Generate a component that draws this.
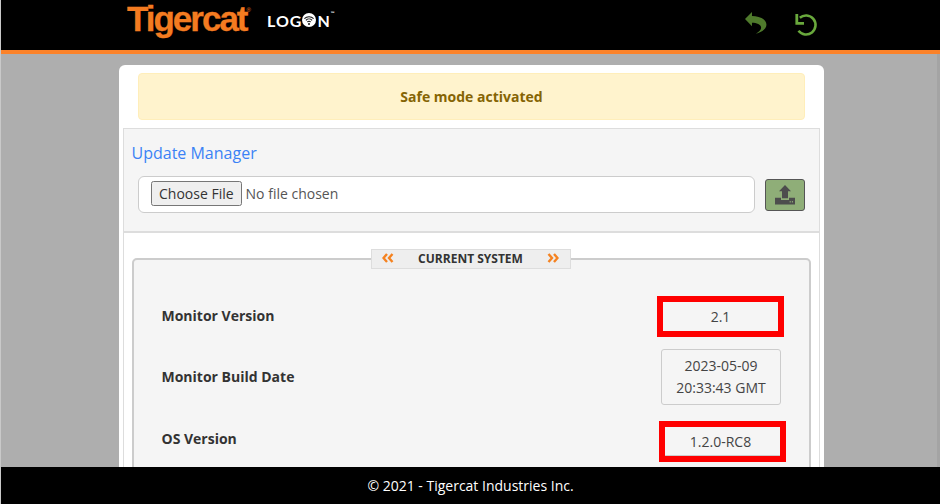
<div class="shell">
  <header class="topbar">
    <div class="brand">
      <span class="tigercat">Tigercat<sup>®</sup></span>
      <span class="logon">LOG<svg class="wifi-o" viewBox="0 0 14 14" aria-hidden="true"><circle cx="7" cy="7" r="7" fill="#fff"/><path d="M2.4 5.6a6.6 6.6 0 0 1 9.2 0M3.9 7.3a4.4 4.4 0 0 1 6.2 0M5.4 9a2.2 2.2 0 0 1 3.2 0" fill="none" stroke="#111" stroke-width="1.1"/><circle cx="7" cy="11" r="1" fill="#111"/></svg>N<sup>™</sup></span>
    </div>
    <div class="actions">
      <svg class="reply" viewBox="0 0 24 23" preserveAspectRatio="none" aria-hidden="true"><path d="M0 7.2 7.6 0v4.2C15 4.4 23.4 6.6 23.4 13.4c0 4.4-5 7.4-11.6 9.4 3.6-2.4 5.8-4.2 5.8-6.4 0-3.4-5-5.2-10-5.2v3.800z" fill="#4f7a2c"/></svg>
      <svg class="undo" viewBox="0 0 24 24" aria-hidden="true"><path d="M5.800 4.800A9.500 9.500 0 1 1 4.500 17.800" fill="none" stroke="#69a83c" stroke-width="2.600"/><path d="M2.800 1v9.300H10" fill="none" stroke="#69a83c" stroke-width="2.800"/></svg>
    </div>
  </header>

  <main class="stage">
    <div class="card">
      <div class="alert">Safe mode activated</div>
      <section class="update">
        <h2>Update Manager</h2>
        <div class="upload-row">
          <div class="file-box"><input type="file" /></div>
          <button class="upload-btn" type="button" aria-label="Upload">
            <svg viewBox="0 0 20 20" aria-hidden="true"><path d="M10 0 16 6.200H13V13.300H7V6.200H4z" fill="#4d4d4d"/><path d="M0 12.700H6V15H14V12.700H20V19.400H0z" fill="#4d4d4d"/><path d="M14.700 16h1v1.600h-1zM16.900 16h1v1.600h-1z" fill="#8fae78"/></svg>
          </button>
        </div>
      </section>
      <div class="lower">
        <fieldset>
          <legend>
            <svg viewBox="0 0 12 10" aria-hidden="true"><path d="M5 1 1.500 5 5 9M10.500 1 7 5l3.500 4" fill="none" stroke="#f58220" stroke-width="2.400"/></svg>
            <span>CURRENT SYSTEM</span>
            <svg viewBox="0 0 12 10" aria-hidden="true"><path d="M1.500 1 5 5 1.500 9M7 1l3.500 4L7 9" fill="none" stroke="#f58220" stroke-width="2.400"/></svg>
          </legend>
          <div class="row first">
            <span class="label">Monitor Version</span>
            <div class="value alarm">2.1</div>
          </div>
          <div class="row second">
            <span class="label">Monitor Build Date</span>
            <div class="value plain">2023-05-09<br />20:33:43 GMT</div>
          </div>
          <div class="row third">
            <span class="label os-label">OS Version</span>
            <div class="value alarm os">1.2.0-RC8</div>
          </div>
        </fieldset>
      </div>
    </div>
  </main>

  <footer class="footbar">© 2021 - Tigercat Industries Inc.</footer>
</div>

<style>
  :global(body) {
    margin: 0;
    background: #c9c9c9;
  }
  .shell {
    box-sizing: border-box;
    height: 504px;
    padding-left: 1px;
    display: flex;
    flex-direction: column;
    overflow: hidden;
    font-family: "Open Sans", "Liberation Sans", sans-serif;
    color: #333;
  }
  .topbar {
    flex: none;
    box-sizing: border-box;
    height: 54px;
    background: #000;
    border-bottom: 4px solid #fb8229;
    display: flex;
    align-items: flex-start;
    justify-content: space-between;
  }
  .brand {
    display: flex;
    align-items: flex-start;
    margin-left: 126px;
  }
  .tigercat {
    font-family: "Liberation Sans", Arial, sans-serif;
    font-weight: 700;
    font-size: 35px;
    line-height: 37px;
    letter-spacing: -2px;
    -webkit-text-stroke: 0.3px #f47b20;
    color: #f47b20;
    width: 140px;
    white-space: nowrap;
  }
  .tigercat sup {
    font-size: 6px;
    font-weight: 400;
    letter-spacing: 0;
    -webkit-text-stroke: 0;
    vertical-align: 19px;
    line-height: 0;
    margin-left: 0;
  }
  .logon {
    display: flex;
    align-items: center;
    margin-top: 11px;
    height: 18px;
    font-family: Lato, "Open Sans", sans-serif;
    font-weight: 700;
    font-size: 16px;
    letter-spacing: 1px;
    color: #fff;
  }
  .logon sup {
    font-size: 5px;
    letter-spacing: 0;
    align-self: flex-start;
    line-height: 5px;
    margin-top: 0;
  }
  .wifi-o {
    width: 14px;
    height: 14px;
    margin: 0 1px 0 0;
  }
  .actions {
    display: flex;
    align-items: flex-start;
    gap: 27px;
    margin-right: 122px;
  }
  .reply {
    width: 22px;
    height: 22px;
    margin-top: 12px;
  }
  .undo {
    width: 24px;
    height: 24px;
    margin-top: 13px;
  }
  .stage {
    flex: 1;
    min-height: 0;
    overflow: hidden;
    background: #aeaeae;
    border-right: 3px solid #a4a4a4;
    padding: 11px 0 0 118px;
  }
  .card {
    box-sizing: border-box;
    width: 705px;
    min-height: 100%;
    background: #fff;
    border-radius: 6px 6px 0 0;
    padding: 8px 4px 0;
  }
  .alert {
    box-sizing: border-box;
    height: 47px;
    margin: 0 15px 8px;
    background: #fff3cd;
    border: 1px solid #ffeeba;
    border-radius: 4px;
    color: #856404;
    font-weight: 700;
    font-size: 14px;
    display: flex;
    align-items: center;
    justify-content: center;
  }
  .update {
    box-sizing: border-box;
    height: 105px;
    background: #f5f5f5;
    border: 1px solid #ddd;
    border-bottom-width: 2px;
    padding: 12px 0 0 7.5px;
  }
  h2 {
    margin: 0 0 11px;
    font-size: 16px;
    font-weight: 400;
    line-height: 24px;
    color: #3b82f6;
  }
  .upload-row {
    display: flex;
    align-items: center;
    gap: 10px;
    margin-left: 6.5px;
  }
  .file-box {
    box-sizing: border-box;
    width: 617px;
    height: 37px;
    background: #fff;
    border: 1px solid #ccc;
    border-radius: 6px;
    padding: 5px 12px 7px;
    display: flex;
    align-items: center;
  }
  input[type="file"] {
    font-family: "Open Sans", sans-serif;
    font-size: 14px;
    color: #555;
    width: 100%;
  }
  input[type="file"]::file-selector-button {
    font-family: "Open Sans", sans-serif;
    font-size: 14px;
    color: #333;
  }
  .upload-btn {
    box-sizing: border-box;
    width: 40px;
    height: 32px;
    padding: 0;
    background: #8fae78;
    border: 1px solid #555;
    border-radius: 3px;
    display: flex;
    align-items: center;
    justify-content: center;
  }
  .upload-btn svg {
    width: 20px;
    height: 20px;
  }
  .lower {
    border: solid #ddd;
    border-width: 0 1px;
    padding: 16px 8px 0;
    min-height: 300px;
  }
  fieldset {
    margin: 0;
    min-width: 0;
    background: #f5f5f5;
    border: 2px solid #ccc;
    border-radius: 5px;
    padding: 27px 23px 20px 27.5px;
  }
  legend {
    box-sizing: border-box;
    width: 200px;
    height: 20px;
    margin: 0 0 0 209.5px;
    padding: 0 10.5px 2px 9.5px;
    background: #eee;
    border: 1px solid #ddd;
    display: flex;
    align-items: center;
    justify-content: space-between;
    font-weight: 700;
    font-size: 12px;
    color: #333;
  }
  legend svg {
    width: 12px;
    height: 10px;
  }
  .row {
    display: flex;
    align-items: center;
    justify-content: space-between;
    font-size: 14px;
  }
  .second {
    margin-top: 12px;
  }
  .third {
    margin-top: 16px;
  }
  .label {
    font-weight: 700;
    color: #333;
    padding-bottom: 2px;
  }
  .os-label {
    padding-bottom: 6px;
  }
  .value {
    box-sizing: border-box;
    text-align: center;
    color: #444;
    font-size: 14px;
    line-height: 22px;
    display: flex;
    align-items: center;
    justify-content: center;
  }
  .alarm {
    width: 127px;
    height: 41px;
    margin-right: 2px;
    border: 6px solid #f00;
  }
  .os {
    margin-right: 0;
    padding-right: 4px;
    box-shadow: inset 0 -1px 0 #ccc;
  }
  .plain {
    width: 120px;
    height: 56px;
    margin-right: 5px;
    border: 1px solid #ccc;
    border-radius: 3px;
  }
  .footbar {
    flex: none;
    height: 37px;
    background: #000;
    color: #fff;
    font-size: 14px;
    display: flex;
    align-items: center;
    justify-content: center;
  }
</style>
